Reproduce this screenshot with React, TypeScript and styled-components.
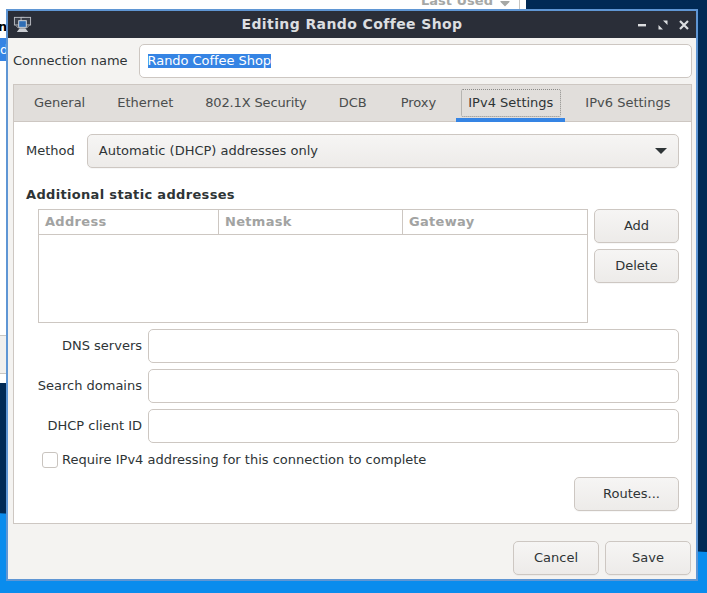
import React from "react";
import styled, { createGlobalStyle } from "styled-components";
import { FaCaretDown } from "react-icons/fa";

// Page
const GlobalStyle = createGlobalStyle`
	html, body {
		margin: 0;
		padding: 0;
		height: 100%;
		overflow: hidden;
	}
	body {
		font-family: "DejaVu Sans", sans-serif;
		font-size: 13px;
		line-height: 14px;
		color: #2e3436;
	}
`;
const Desktop = styled.div`
	position: relative;
	width: 707px;
	height: 593px;
	overflow: hidden;
	background: #0a8ced;
`;
const DarkWallpaper = styled.div`
	position: absolute;
	left: 0;
	top: 0;
	width: 707px;
	height: 552px;
	background: #012a55;
	clip-path: polygon(0 0, 100% 0, 100% 100%, 0 93%);
`;
const BehindWindow = styled.div`
	position: absolute;
	left: 0;
	top: 0;
	width: 526px;
	height: 383px;
	background: #fff;
	color: #2e3436;
`;
const BehindDivider = styled.div`
	position: absolute;
	left: 519px;
	top: 0;
	width: 1px;
	height: 9px;
	background: #c8c6c2;
`;
const BehindHeader = styled.span`
	position: absolute;
	left: 421px;
	top: -6px;
	font-weight: 700;
	color: #a6a8a6;
`;
const BehindCaret = styled(FaCaretDown)`
	position: absolute;
	left: 497px;
	top: -5px;
	color: #a6a8a6;
`;
const BehindLabel = styled.span`
	position: absolute;
	left: -2px;
	top: 20px;
	font-weight: 700;
	color: #000;
`;
const BehindSelected = styled.div`
	position: absolute;
	left: 0;
	top: 38px;
	width: 7px;
	height: 23px;
	background: #3584e4;
	color: #fff;
	line-height: 23px;
	overflow: hidden;
`;
const BehindFooter = styled.div`
	position: absolute;
	left: 0;
	top: 335px;
	width: 7px;
	height: 37px;
	background: #f1f0ee;
	border-top: 1px solid #c8c6c2;
	border-bottom: 1px solid #c8c6c2;
`;

// Dialog frame
const Dialog = styled.div`
	position: absolute;
	left: 6px;
	top: 9px;
	width: 692px;
	height: 572px;
	box-sizing: border-box;
	border: 2px solid #5f96d4;
	background: #f4f3f1;
	display: flex;
	flex-direction: column;
`;
const TitleBar = styled.header`
	height: 27px;
	flex: none;
	background: #2a2e38;
	color: #dcdee0;
	display: grid;
	grid-template-columns: 70px 1fr 70px;
	align-items: center;
`;
const TitleText = styled.h1`
	margin: 0;
	font-size: 14px;
	line-height: 15px;
	font-weight: 700;
	text-align: center;
	letter-spacing: 0.4px;
`;
const WindowIcon = styled.svg`
	margin-left: 5px;
	display: block;
`;
const WindowControls = styled.div`
	display: flex;
	justify-content: flex-end;
	gap: 11px;
	padding-right: 7px;
`;
const Body = styled.div`
	flex: 1;
	display: flex;
	flex-direction: column;
	padding: 6px 4px 0 5px;
	min-height: 0;
`;

// Connection name row
const NameRow = styled.div`
	display: flex;
	align-items: center;
	gap: 11px;
	height: 34px;
	flex: none;
`;
const NameInput = styled.div`
	flex: 1;
	height: 34px;
	box-sizing: border-box;
	background: #fff;
	border: 1px solid #cdc7c2;
	border-radius: 5px;
	display: flex;
	align-items: center;
	padding: 0 8px;
`;
const Selection = styled.span`
	background: #3584e4;
	color: #fff;
	letter-spacing: -0.05px;
`;

// Notebook
const Notebook = styled.section`
	margin-top: 6px;
	flex: none;
	height: 440px;
	box-sizing: border-box;
	display: flex;
	flex-direction: column;
	border: 1px solid #cdc7c2;
	background: #fff;
`;
const TabBar = styled.nav`
	display: flex;
	gap: 8px;
	height: 37px;
	flex: none;
	box-sizing: border-box;
	background: #e1dedb;
	border-bottom: 1px solid #cdc7c2;
	padding-left: 8px;
`;
const Tab = styled.div<{ $active?: boolean; $tight?: boolean; $after?: number }>`
	position: relative;
	padding: 0 12px;
	margin-right: ${(props) => props.$after ?? 0}px;
	display: flex;
	align-items: center;
	letter-spacing: ${(props) => (props.$tight ? "-0.15px" : "0")};
	color: ${(props) => (props.$active ? "#2e3436" : "#4a4d4d")};

	${(props) =>
		props.$active &&
		`&::before {
			content: "";
			position: absolute;
			left: 5px;
			right: 4px;
			top: 4px;
			bottom: 4px;
			border: 1px dotted #8a8a88;
			border-radius: 2px;
		}
		&::after {
			content: "";
			position: absolute;
			left: 0;
			right: 0;
			bottom: -1px;
			height: 4px;
			background: #3584e4;
		}`}
`;
const Page = styled.div`
	flex: 1;
	display: flex;
	flex-direction: column;
	padding: 12px 12px 0;
	min-height: 0;
`;

// Method row
const MethodRow = styled.div`
	display: flex;
	align-items: center;
	gap: 12px;
	flex: none;
`;
const Button = styled.button<{ $width?: number }>`
	height: 34px;
	width: ${(props) => (props.$width ? `${props.$width}px` : "auto")};
	flex: none;
	box-sizing: border-box;
	margin: 0;
	padding: 0;
	font: inherit;
	color: #2e3436;
	background: linear-gradient(to bottom, #f6f5f4, #edebe9);
	border: 1px solid #cdc7c2;
	border-radius: 5px;
	box-shadow: 0 1px 0 rgba(0, 0, 0, 0.03);
`;
const ComboBox = styled(Button)`
	flex: 1;
	display: flex;
	align-items: center;
	justify-content: space-between;
	padding: 0 11px;
`;
const Heading = styled.h2`
	margin: 18px 0 0;
	font-size: 13px;
	line-height: 17px;
	font-weight: 700;
	color: #2e3436;
	flex: none;
	letter-spacing: 0.33px;
`;

// Addresses table
const AddressRow = styled.div`
	display: flex;
	gap: 6px;
	margin: 6px 0 0 12px;
	flex: none;
`;
const AddressTable = styled.div`
	flex: 1;
	height: 114px;
	box-sizing: border-box;
	border: 1px solid #cdc7c2;
`;
const TableHead = styled.div`
	display: grid;
	grid-template-columns: 180px 184px 1fr;
	height: 25px;
	box-sizing: border-box;
	border-bottom: 1px solid #cdc7c2;
`;
const HeadCell = styled.div`
	display: flex;
	align-items: center;
	padding-left: 6px;
	font-weight: 700;
	color: #a2a3a2;
	letter-spacing: 0.3px;
	border-right: 1px solid #cdc7c2;

	&:last-child {
		border-right: none;
	}
`;
const SideButtons = styled.div`
	display: flex;
	flex-direction: column;
	gap: 6px;
`;

// Text fields
const FieldList = styled.div`
	display: flex;
	flex-direction: column;
	gap: 6px;
	margin-top: 6px;
	flex: none;
`;
const FieldRow = styled.div`
	display: grid;
	grid-template-columns: 116px 1fr;
	column-gap: 6px;
	align-items: center;
`;
const FieldLabel = styled.label`
	text-align: right;
`;
const FieldInput = styled.div`
	height: 34px;
	box-sizing: border-box;
	background: #fff;
	border: 1px solid #cdc7c2;
	border-radius: 5px;
`;
const CheckRow = styled.label`
	display: flex;
	align-items: center;
	gap: 4px;
	margin: 6px 0 0 16px;
	height: 22px;
	flex: none;
`;
const CheckBox = styled.span`
	width: 16px;
	height: 16px;
	box-sizing: border-box;
	background: #fff;
	border: 1px solid #c9c4bf;
	border-radius: 3px;
`;
const RoutesRow = styled.div`
	display: flex;
	justify-content: flex-end;
	margin-top: 6px;
	flex: none;
`;
const RoutesButton = styled(Button)`
	padding-left: 10px;
`;

// Footer
const Footer = styled.footer`
	flex: 1;
	display: flex;
	justify-content: flex-end;
	align-items: flex-start;
	gap: 6px;
	padding: 17px 1px 0 0;
`;

const tabs = [
	{ label: "General" },
	{ label: "Ethernet" },
	{ label: "802.1X Security", tight: true },
	{ label: "DCB", after: 2 },
	{ label: "Proxy" },
	{ label: "IPv4 Settings", active: true },
	{ label: "IPv6 Settings" },
];

const fields = ["DNS servers", "Search domains", "DHCP client ID"];

function NetworkIcon() {
	return (
		<WindowIcon width="19" height="19" viewBox="0 0 20 20">
			<rect x="1.5" y="2.5" width="10" height="8" fill="#3a3f4a" stroke="#b9bcc2" />
			<rect x="8.5" y="2.5" width="10" height="8" fill="#3a3f4a" stroke="#b9bcc2" />
			<rect x="6" y="6" width="8" height="7" fill="#2f6db5" stroke="#d8dade" />
			<path d="M7 14 L13 14 L16 18 L4 18 Z" fill="#c9ccd2" />
			<path d="M3 11 L6 14 M17 11 L14 14" stroke="#b9bcc2" fill="none" />
		</WindowIcon>
	);
}

function WindowButtons() {
	return (
		<WindowControls>
			<svg width="10" height="10" viewBox="0 0 10 10">
				<rect x="1" y="4" width="8" height="2.4" fill="#dcdee0" />
			</svg>
			<svg width="10" height="10" viewBox="0 0 10 10">
				<path d="M5 0.5 H9.5 V5 Z M0.5 5 V9.5 H5 Z" fill="#dcdee0" />
			</svg>
			<svg width="10" height="10" viewBox="0 0 10 10">
				<path d="M1 1 L9 9 M9 1 L1 9" stroke="#dcdee0" strokeWidth="2.2" />
			</svg>
		</WindowControls>
	);
}

export default function App(): JSX.Element {
	return (
		<>
			<GlobalStyle />
			<Desktop>
				<DarkWallpaper />
				<BehindWindow>
					<BehindDivider />
					<BehindHeader>Last Used</BehindHeader>
					<BehindCaret size={16} />
					<BehindLabel>n</BehindLabel>
					<BehindSelected>d</BehindSelected>
					<BehindFooter />
				</BehindWindow>
				<Dialog>
					<TitleBar>
						<NetworkIcon />
						<TitleText>Editing Rando Coffee Shop</TitleText>
						<WindowButtons />
					</TitleBar>
					<Body>
						<NameRow>
							Connection name
							<NameInput>
								<Selection>Rando Coffee Shop</Selection>
							</NameInput>
						</NameRow>
						<Notebook>
							<TabBar>
								{tabs.map((tab) => (
									<Tab
										key={tab.label}
										$active={tab.active}
										$tight={tab.tight}
										$after={tab.after}
									>
										{tab.label}
									</Tab>
								))}
							</TabBar>
							<Page>
								<MethodRow>
									Method
									<ComboBox>
										Automatic (DHCP) addresses only
										<svg width="12" height="6" viewBox="0 0 12 6">
											<path d="M0 0 H12 L6 6 Z" fill="#2e3436" />
										</svg>
									</ComboBox>
								</MethodRow>
								<Heading>Additional static addresses</Heading>
								<AddressRow>
									<AddressTable>
										<TableHead>
											<HeadCell>Address</HeadCell>
											<HeadCell>Netmask</HeadCell>
											<HeadCell>Gateway</HeadCell>
										</TableHead>
									</AddressTable>
									<SideButtons>
										<Button $width={85}>Add</Button>
										<Button $width={85}>Delete</Button>
									</SideButtons>
								</AddressRow>
								<FieldList>
									{fields.map((label) => (
										<FieldRow key={label}>
											<FieldLabel>{label}</FieldLabel>
											<FieldInput />
										</FieldRow>
									))}
								</FieldList>
								<CheckRow>
									<CheckBox />
									Require IPv4 addressing for this connection to complete
								</CheckRow>
								<RoutesRow>
									<RoutesButton $width={105}>Routes...</RoutesButton>
								</RoutesRow>
							</Page>
						</Notebook>
						<Footer>
							<Button $width={86}>Cancel</Button>
							<Button $width={86}>Save</Button>
						</Footer>
					</Body>
				</Dialog>
			</Desktop>
		</>
	);
}
